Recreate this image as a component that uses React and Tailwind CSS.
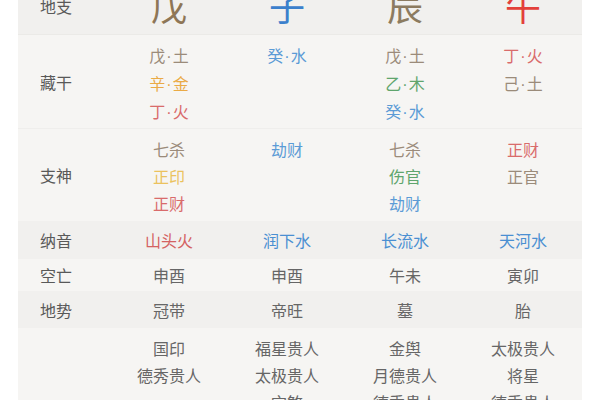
const font = { fontFamily: '"Noto Sans CJK SC", "Noto Sans", sans-serif' };

const gray = "text-[#9b8b7a]";
const gold = "text-[#eaaa45]";
const yellow = "text-[#ebc25e]";
const red = "text-[#d96b6b]";
const blue = "text-[#5b9bd6]";
const green = "text-[#5fa56d]";

const dark = "bg-[#f1f0ee]";
const light = "bg-[#f6f5f3]";

// text like 戊·土 gets a narrow middle dot
function Item({ text }) {
  if (!text.includes("·")) return text;
  const [a, b] = text.split("·");
  return (
    <>
      {a}
      <span className="mx-[1px] font-['Liberation_Sans']">·</span>
      {b}
    </>
  );
}

function Row({ label, bg, h, cells }) {
  return (
    <div className={`grid grid-cols-[92px_repeat(4,1fr)] ${bg} ${h}`}>
      <div className="flex items-center pl-[22px] text-[16px] text-[#595959]">
        {label}
      </div>
      {cells.map((c, i) => (
        <div key={i} className="flex flex-col items-center pt-[7px]">
          {c.map((t, j) => (
            <div key={j} className={`text-[16px] leading-[27px] whitespace-nowrap ${t[1]}`}>
              <Item text={t[0]} />
            </div>
          ))}
        </div>
      ))}
    </div>
  );
}

function OneLine({ label, bg, h, cells }) {
  return (
    <div className={`grid grid-cols-[92px_repeat(4,1fr)] ${bg} ${h}`}>
      <div className="flex items-center pl-[22px] text-[16px] text-[#595959]">
        {label}
      </div>
      {cells.map((c, i) => (
        <div key={i} className={`flex items-center justify-center text-[16px] ${c[1]}`}>
          {c[0]}
        </div>
      ))}
    </div>
  );
}

export default function App() {
  return (
    <div className="w-[600px] h-[400px] bg-white overflow-hidden" style={font}>
      <div className="ml-[18px] w-[564px] -mt-[25px]">
        {/* 地支 */}
        <div className={`grid grid-cols-[92px_repeat(4,1fr)] ${dark} h-[60px] border-b border-[#ebeae7]`}>
          <div className="flex items-center pl-[22px] text-[16px] text-[#595959] pt-[2px]">地支</div>
          {[
            ["戊", "text-[#8e7656]"],
            ["子", "text-[#3b80cc]"],
            ["辰", "text-[#8c7b60]"],
            ["午", "text-[#e3403a]"],
          ].map((c, i) => (
            <div key={i} className={`flex items-center justify-center text-[36px] leading-none ${c[1]}`}>
              {c[0]}
            </div>
          ))}
        </div>

        <Row
          label="藏干"
          bg={light}
          h="h-[93px]"
          cells={[
            [["戊·土", gray], ["辛·金", gold], ["丁·火", red]],
            [["癸·水", blue]],
            [["戊·土", gray], ["乙·木", green], ["癸·水", blue]],
            [["丁·火", red], ["己·土", gray]],
          ]}
        />

        <div className="border-t border-[#efeeec]">
          <Row
            label="支神"
            bg={light}
            h="h-[92px]"
            cells={[
              [["七杀", gray], ["正印", yellow], ["正财", red]],
              [["劫财", blue]],
              [["七杀", gray], ["伤官", green], ["劫财", blue]],
              [["正财", red], ["正官", gray]],
            ]}
          />
        </div>

        <OneLine
          label="纳音"
          bg={dark}
          h="h-[38px]"
          cells={[
            ["山头火", "text-[#d46262]"],
            ["润下水", "text-[#4a8fd2]"],
            ["长流水", "text-[#4a8fd2]"],
            ["天河水", "text-[#4a8fd2]"],
          ]}
        />

        <OneLine
          label="空亡"
          bg={light}
          h="h-[32px]"
          cells={[
            ["申酉", "text-[#666]"],
            ["申酉", "text-[#666]"],
            ["午未", "text-[#666]"],
            ["寅卯", "text-[#666]"],
          ]}
        />

        <OneLine
          label="地势"
          bg={dark}
          h="h-[37px]"
          cells={[
            ["冠带", "text-[#666]"],
            ["帝旺", "text-[#666]"],
            ["墓", "text-[#666]"],
            ["胎", "text-[#666]"],
          ]}
        />

        <Row
          label="神煞"
          bg={light}
          h="h-[200px]"
          cells={[
            [["国印", "text-[#666]"], ["德秀贵人", "text-[#666]"]],
            [["福星贵人", "text-[#666]"], ["太极贵人", "text-[#666]"], ["灾煞", "text-[#666]"], ["天乙贵人", "text-[#666]"]],
            [["金舆", "text-[#666]"], ["月德贵人", "text-[#666]"], ["德秀贵人", "text-[#666]"], ["华盖", "text-[#666]"]],
            [["太极贵人", "text-[#666]"], ["将星", "text-[#666]"], ["德秀贵人", "text-[#666]"]],
          ]}
        />
      </div>
    </div>
  );
}
